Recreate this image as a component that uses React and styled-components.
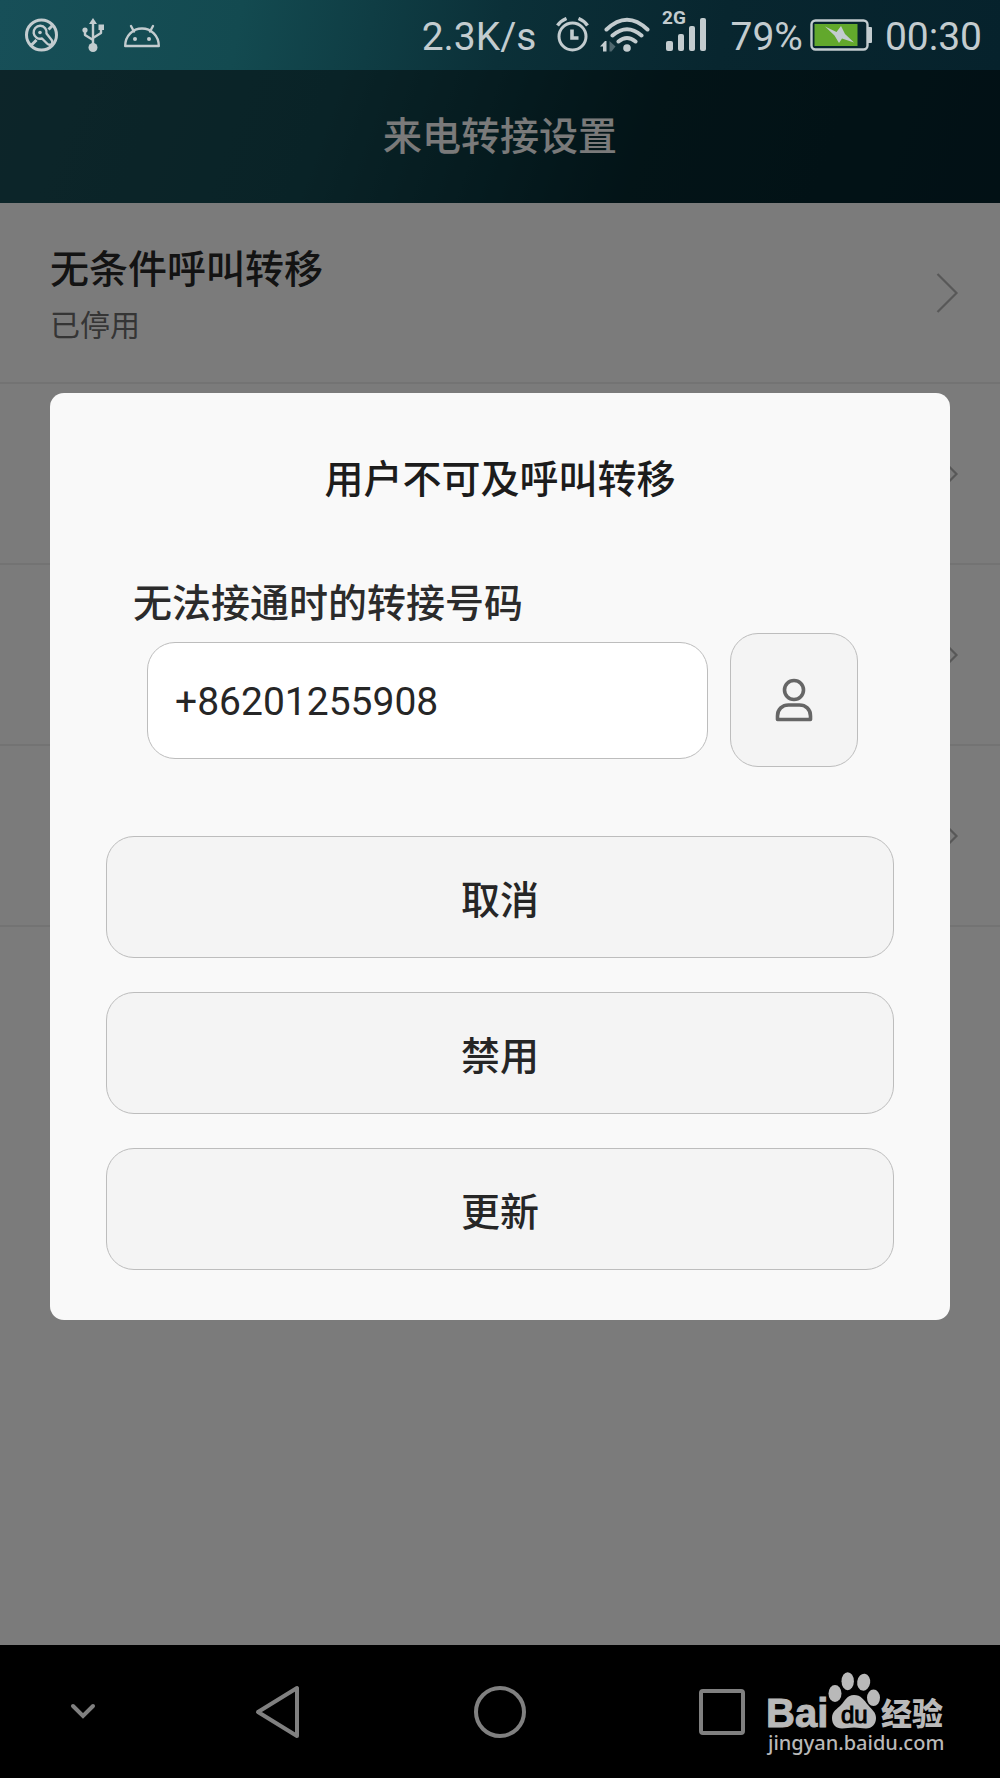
import React, { useState } from 'react'
import styled, { createGlobalStyle } from 'styled-components'

const GlobalStyle = createGlobalStyle`
	* {
		box-sizing: border-box;
	}
	body {
		margin: 0;
		background: #7b7b7b;
		font-family: Roboto, 'Noto Sans CJK SC', sans-serif;
	}
	button,
	input {
		font-family: inherit;
	}
`

const Screen = styled.div`
	min-height: 100vh;
	display: flex;
	flex-direction: column;
`

const StatusBar = styled.div`
	height: 70px;
	padding: 0 18px 0 24px;
	display: flex;
	align-items: center;
	justify-content: space-between;
	background: linear-gradient(100deg, #174f58 0%, #134a50 24%, #0b3038 50%, #08262f 72%, #06222c 100%);
	color: #c3cccf;
`

const StatusGroup = styled.div`
	display: flex;
	align-items: center;
	gap: ${(props) => props.$gap}px;
`

const StatusText = styled.span`
	padding-top: 4px;
	font-size: 39px;
	line-height: 48px;
`

const Content = styled.div`
	flex: 1;
	display: grid;
	grid-template-columns: minmax(0, 1fr);
	grid-template-rows: minmax(0, 1fr);
`

const Page = styled.main`
	grid-area: 1 / 1;
	background: #f7f7f7;
`

const Header = styled.header`
	height: 133px;
	display: flex;
	align-items: center;
	justify-content: center;
	background: linear-gradient(110deg, #1a4b53 0%, #13474f 32%, #0b363e 50%, #06282f 64%, #04222b 100%);

	& h1 {
		margin: 0;
		font-size: 39px;
		font-weight: 500;
		line-height: 56px;
		color: #f4f4f4;
	}
`

const List = styled.ul`
	margin: 0;
	padding: 0;
	list-style: none;
`

const Row = styled.li`
	height: 181px;
	padding: 0 40px 0 50px;
	display: flex;
	align-items: center;
	justify-content: space-between;
	border-bottom: 2px solid #e6e6e6;

	& div {
		padding-top: 10px;
	}
	& strong {
		display: block;
		font-size: 39px;
		font-weight: 500;
		line-height: 56px;
		color: #262626;
	}
	& span {
		display: block;
		font-size: 30px;
		line-height: 56px;
		color: #6a6a6a;
	}
`

const Overlay = styled.div`
	grid-area: 1 / 1;
	z-index: 1;
	padding: 0 50px 2px;
	display: flex;
	align-items: center;
	background: rgba(0, 0, 0, 0.5);
`

const Dialog = styled.form`
	flex: 1;
	min-width: 0;
	padding: 57px 56px 50px;
	border-radius: 14px;
	background: #f9f9f9;

	& h2 {
		margin: 0;
		font-size: 39px;
		font-weight: 500;
		line-height: 60px;
		text-align: center;
		color: #1c1c1c;
	}
`

const Field = styled.div`
	padding: 65px 36px 69px 27px;

	& label {
		display: block;
		font-size: 39px;
		font-weight: 500;
		line-height: 58px;
		color: #2b2b2b;
	}
`

const FieldRow = styled.div`
	padding-left: 14px;
	display: flex;
	align-items: center;
	gap: 22px;
`

const NumberInput = styled.input`
	flex: 1;
	min-width: 0;
	height: 117px;
	padding: 4px 27px 0;
	border: 1px solid #bdbdbd;
	border-radius: 28px;
	background: #fff;
	font-size: 39px;
	color: #262626;
	outline: none;
`

const ContactButton = styled.button`
	width: 128px;
	height: 134px;
	padding: 0;
	display: flex;
	align-items: center;
	justify-content: center;
	border: 1px solid #bdbdbd;
	border-radius: 28px;
	background: #f4f4f4;
`

const Actions = styled.div`
	display: flex;
	flex-direction: column;
	gap: 34px;
`

const ActionButton = styled.button`
	height: 122px;
	border: 1px solid #bdbdbd;
	border-radius: 28px;
	background: #f4f4f4;
	font-size: 39px;
	font-weight: 500;
	color: #262626;
`

const NavBar = styled.nav`
	position: relative;
	height: 133px;
	display: grid;
	grid-template-columns: 3fr 4fr 4fr 4fr 3fr;
	align-items: center;
	background: #000;
	color: #808080;
`

const NavButton = styled.button`
	padding: 0;
	display: flex;
	justify-content: center;
	border: none;
	background: none;
	color: inherit;
`

// watermark sits over the bar
const Brand = styled.div`
	position: absolute;
	top: 16px;
	right: 52px;
	color: #b9b9b9;

	& svg {
		display: block;
	}
`

const BlockIcon = () => (
	<svg width='36' height='34' viewBox='0 0 36 34' fill='none' stroke='currentColor'>
		<circle cx='17.500' cy='17' r='15' strokeWidth='3' />
		<path d='M6.500 28l6-6M24.500 11.500l4.500-4.500' strokeWidth='3' />
		<path d='M18 20.500a6.500 6.500 0 1 1 4.500-5l5.500 7q1 3-1 4t-4-1z' strokeWidth='2.400' strokeLinejoin='round' />
		<circle cx='16' cy='14.500' r='1.800' fill='currentColor' stroke='none' />
	</svg>
)

const UsbIcon = () => (
	<svg width='24' height='34' viewBox='-2 0 24 34' fill='none' stroke='currentColor' strokeWidth='2.400'>
		<path d='M11 4v25M3 12v5l8 5M19 9v6l-8 5' strokeLinejoin='round' />
		<path d='M11 0l4 6H7z' fill='currentColor' stroke='none' />
		<circle cx='3' cy='12' r='2.600' fill='currentColor' stroke='none' />
		<rect x='16.500' y='6.500' width='5.500' height='5.500' fill='currentColor' stroke='none' />
		<circle cx='11' cy='29.500' r='4.500' fill='currentColor' stroke='none' />
	</svg>
)

const AndroidIcon = () => (
	<svg width='38' height='34' viewBox='0 0 38 34' fill='none' stroke='currentColor' strokeWidth='2.400'>
		<path d='M1.200 28C1.200 17.500 9 10.500 18 10.500S34.800 17.500 34.800 28z' strokeLinejoin='round' />
		<path d='M7 8l3 5.500M29 8l-3 5.500' strokeLinecap='round' />
		<circle cx='11' cy='21' r='2' fill='currentColor' stroke='none' />
		<circle cx='25' cy='21' r='2' fill='currentColor' stroke='none' />
	</svg>
)

const AlarmIcon = () => (
	<svg width='34' height='36' viewBox='0 0 34 36' fill='none' stroke='currentColor' strokeWidth='3'>
		<circle cx='16.500' cy='19.500' r='13.500' />
		<path d='M16 12.500v8.500h6.500' strokeWidth='3.600' />
		<path d='M1.500 8.500q3-4.500 9-7M31.500 8.500q-3-4.500-9-7' strokeWidth='3.400' />
	</svg>
)

const WifiIcon = () => (
	<svg width='50' height='36' viewBox='0 0 50 36' fill='none' stroke='currentColor' strokeWidth='4'>
		<path d='M6.500 12.500q20.500-19.500 41 0M12.500 18.500q14.500-12.500 29 0M18.500 24.500q8.500-7 17 0' strokeLinecap='round' />
		<circle cx='27' cy='31' r='3.800' fill='currentColor' stroke='none' />
		<path d='M0 29.500l5-5.500h1.500v10.500H3v-5z' fill='currentColor' stroke='none' />
		<path d='M9.500 24l6 5.500-4 5h-2z' fill='#4f676e' stroke='none' />
	</svg>
)

const SignalIcon = () => (
	<svg width='48' height='60' viewBox='0 0 48 60' fill='currentColor'>
		<text x='2' y='19' fontSize='19' fontWeight='700'>
			2G
		</text>
		<rect x='6' y='36' width='7' height='10' rx='2' />
		<rect x='18' y='29' width='6' height='17' rx='2' />
		<rect x='29' y='21' width='6' height='25' rx='2' />
		<rect x='40' y='13' width='6' height='33' rx='2' />
	</svg>
)

const BatteryIcon = () => (
	<svg width='62' height='32' viewBox='0 0 62 32'>
		<rect x='1.500' y='1.500' width='56' height='29' rx='4' fill='none' stroke='currentColor' strokeWidth='2.400' />
		<rect x='4.500' y='5' width='43' height='22' fill='#62a82c' />
		<path d='M58 8h3q1 0 1 1v14q0 1-1 1h-3z' fill='currentColor' />
		<path d='M15 7.500l11.500 5.500 4.500-6 4 8 9 8.500-12-4-3 4.500-4.500-7.500z' fill='currentColor' />
	</svg>
)

const Chevron = () => (
	<svg width='24' height='42' viewBox='0 0 24 42' fill='none' stroke='#b0b0b0' strokeWidth='2.200'>
		<path d='M1.500 2l19 19-19 19' />
	</svg>
)

const PersonIcon = () => (
	<svg width='38' height='44' viewBox='0 0 38 44' fill='none' stroke='#666' strokeWidth='3.600'>
		<circle cx='19' cy='12' r='9.500' />
		<path d='M2.500 41.500v-3.500c0-7 5-11 11-11h11c6 0 11 4 11 11v3.500z' strokeLinejoin='round' />
	</svg>
)

const BaiduLogo = () => (
	<svg width='182' height='100' viewBox='0 0 182 100' fill='currentColor'>
		<ellipse cx='69' cy='32.500' rx='6.500' ry='8.500' />
		<ellipse cx='81.700' cy='20.200' rx='6.200' ry='9' />
		<ellipse cx='97.700' cy='21.200' rx='6.500' ry='8.500' transform='rotate(8 97.700 21.200)' />
		<ellipse cx='107.500' cy='36.800' rx='6.500' ry='8.300' />
		<path d='M88 34c7 0 10 5 14 10s8 7 8 13-4 10.500-10 10.500c-5 0-7-1-12-1s-7 1-12 1c-6 0-10-4-10-10.500s5-9 9-13 6-10 13-10z' />
		<text x='0' y='66' fontSize='40' fontWeight='700' fontFamily='Liberation Sans' stroke='currentColor' strokeWidth='1'>
			Bai
		</text>
		<text x='75' y='62' fontSize='24' fontFamily='Liberation Sans' fill='#000' stroke='#000' strokeWidth='1'>
			du
		</text>
		<text x='115' y='64' fontSize='31' fontWeight='900' fontFamily='Noto Sans CJK SC'>
			经验
		</text>
		<text x='2' y='89' fontSize='20' fontFamily='Noto Sans' fontWeight='500'>
			jingyan.baidu.com
		</text>
	</svg>
)

const rows = [
	{ id: 1, title: '无条件呼叫转移', state: '已停用' },
	{ id: 2 },
	{ id: 3 },
	{ id: 4 },
]

const actions = ['取消', '禁用', '更新']

const App = () => {
	const [number, setNumber] = useState('+86201255908')

	return (
		<Screen>
			<GlobalStyle />
			<StatusBar>
				<StatusGroup $gap={20}>
					<BlockIcon />
					<UsbIcon />
					<AndroidIcon />
				</StatusGroup>
				<StatusGroup $gap={22}>
					<StatusGroup $gap={20}>
						<StatusText>2.3K/s</StatusText>
						<StatusGroup $gap={10}>
							<AlarmIcon />
							<WifiIcon />
							<SignalIcon />
						</StatusGroup>
					</StatusGroup>
					<StatusGroup $gap={13}>
						<StatusGroup $gap={7}>
							<StatusText>79%</StatusText>
							<BatteryIcon />
						</StatusGroup>
						<StatusText>00:30</StatusText>
					</StatusGroup>
				</StatusGroup>
			</StatusBar>

			<Content>
				<Page>
					<Header>
						<h1>来电转接设置</h1>
					</Header>
					<List>
						{rows.map((row) => (
							<Row key={row.id}>
								<div>
									{row.title && <strong>{row.title}</strong>}
									{row.state && <span>{row.state}</span>}
								</div>
								<Chevron />
							</Row>
						))}
					</List>
				</Page>

				<Overlay>
					<Dialog onSubmit={(e) => e.preventDefault()}>
						<h2>用户不可及呼叫转移</h2>
						<Field>
							<label htmlFor='number'>无法接通时的转接号码</label>
							<FieldRow>
								<NumberInput
									id='number'
									type='tel'
									value={number}
									onChange={(e) => setNumber(e.target.value)}
								/>
								<ContactButton type='button' aria-label='联系人'>
									<PersonIcon />
								</ContactButton>
							</FieldRow>
						</Field>
						<Actions>
							{actions.map((action) => (
								<ActionButton key={action} type='button'>
									{action}
								</ActionButton>
							))}
						</Actions>
					</Dialog>
				</Overlay>
			</Content>

			<NavBar>
				<NavButton aria-label='收起'>
					<svg width='26' height='18' viewBox='0 0 26 18' fill='none' stroke='currentColor' strokeWidth='4' strokeLinecap='round'>
						<path d='M3 3l10 10L23 3' />
					</svg>
				</NavButton>
				<NavButton aria-label='返回'>
					<svg width='46' height='54' viewBox='0 0 46 54' fill='none' stroke='currentColor' strokeWidth='4' strokeLinejoin='round'>
						<path d='M42 3v48L3 27z' />
					</svg>
				</NavButton>
				<NavButton aria-label='主页'>
					<svg width='54' height='54' viewBox='0 0 54 54' fill='none' stroke='currentColor' strokeWidth='4'>
						<circle cx='27' cy='27' r='24' />
					</svg>
				</NavButton>
				<NavButton aria-label='最近任务'>
					<svg width='48' height='48' viewBox='0 0 48 48' fill='none' stroke='currentColor' strokeWidth='4'>
						<rect x='3' y='3' width='42' height='42' rx='2' />
					</svg>
				</NavButton>
				<Brand>
					<BaiduLogo />
				</Brand>
			</NavBar>
		</Screen>
	)
}

export default App
